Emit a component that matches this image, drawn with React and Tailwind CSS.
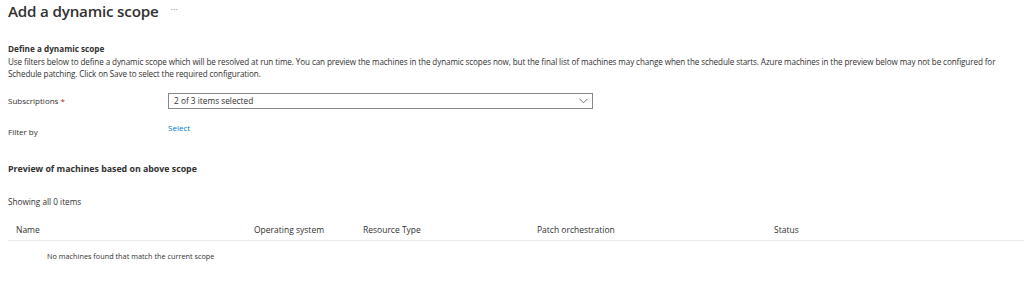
import React from "react";

const columns = ["Name", "Operating system", "Resource Type", "Patch orchestration", "Status"];

const App = () => {
  return (
    <div
      className="w-[1024px] h-[289px] bg-white text-[#323130] overflow-hidden"
      style={{ fontFamily: '"Open Sans", "Noto Sans", sans-serif' }}
    >
      <div className="flex items-center pl-2 pt-[1px] h-[22px]">
        <h1 className="text-[15.2px] font-semibold leading-none tracking-[-0.2px]">Add a dynamic scope</h1>
        <span className="ml-[12px] text-[9px] text-[#8a8886] leading-none -mt-[4px]">···</span>
      </div>

      <div className="px-2 mt-[21px]">
        <p className="text-[8.2px] font-bold leading-[12px]">Define a dynamic scope</p>
        <p className="text-[8.1px] leading-[12px] mt-[1px] w-[1012px] tracking-[-0.1px]">
          Use filters below to define a dynamic scope which will be resolved at run time. You can preview the
          machines in the dynamic scopes now, but the final list of machines may change when the schedule starts.
          Azure machines in the preview below may not be configured for Schedule patching. Click on Save to select
          the required configuration.
        </p>

        <div className="flex items-center mt-[13px] text-[8px]">
          <span className="w-[160px]">
            Subscriptions <span className="text-[#a4262c]">*</span>
          </span>
          <button className="w-[425px] h-[16px] border border-[#8a8886] flex items-center justify-between pl-[5px] pr-[4px] text-left text-[8.3px]">
            <span>2 of 3 items selected</span>
            <svg width="9" height="6" viewBox="0 0 9 6" fill="none" stroke="#605e5c" strokeWidth="0.9">
              <path d="M0.5 0.8 L4.5 4.8 L8.5 0.8" />
            </svg>
          </button>
        </div>

        <div className="flex items-start mt-[13px] text-[8px]">
          <span className="w-[160px] mt-[4px]">Filter by</span>
          <a className="text-[#0078d4] cursor-pointer">Select</a>
        </div>

        <p className="text-[8.8px] font-bold mt-[25px] leading-[12px]">Preview of machines based on above scope</p>
        <p className="text-[8.2px] mt-[21px] leading-[12px]">Showing all 0 items</p>

        <div className="mt-[13px]">
          <div className="grid grid-cols-[238px_109px_174px_237px_1fr] pl-2 h-[20px] items-center border-b border-[#edebe9] text-[8.5px] w-[1016px]">
            {columns.map((col) => (
              <span key={col}>{col}</span>
            ))}
          </div>
          <p className="text-[7.3px] pl-[39px] mt-[10px]">No machines found that match the current scope</p>
        </div>
      </div>
    </div>
  );
};

export default App;
